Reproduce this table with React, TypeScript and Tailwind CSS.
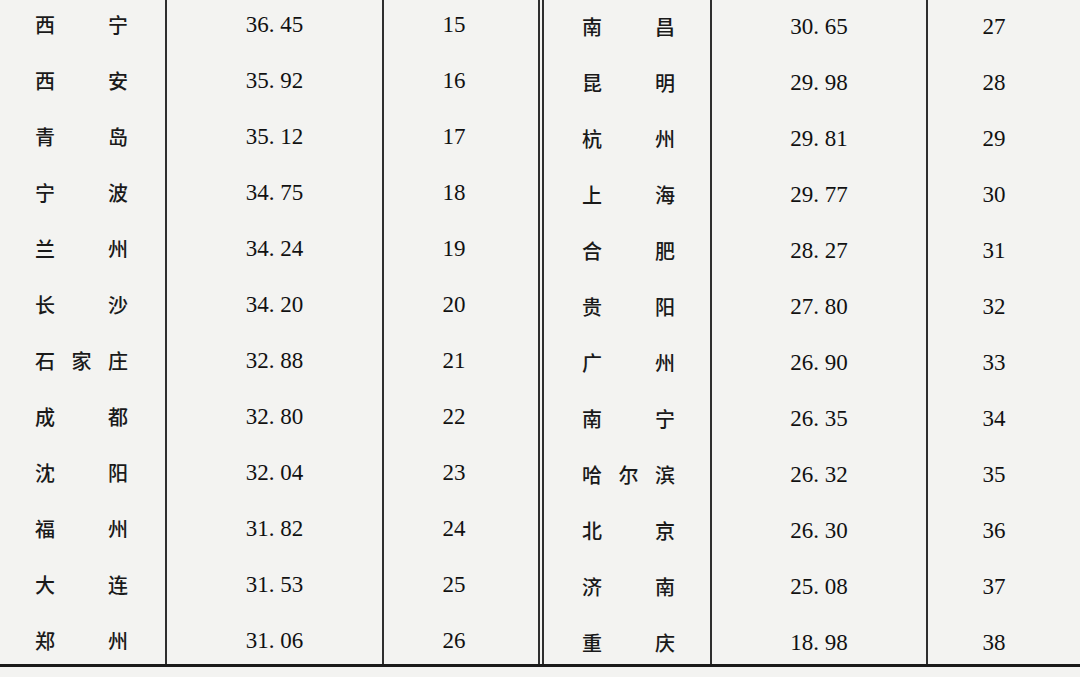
type Row = {
  name: string[];
  value: string;
  rank: number;
};

const leftRows: Row[] = [
  { name: ["西", "宁"], value: "36. 45", rank: 15 },
  { name: ["西", "安"], value: "35. 92", rank: 16 },
  { name: ["青", "岛"], value: "35. 12", rank: 17 },
  { name: ["宁", "波"], value: "34. 75", rank: 18 },
  { name: ["兰", "州"], value: "34. 24", rank: 19 },
  { name: ["长", "沙"], value: "34. 20", rank: 20 },
  { name: ["石", "家", "庄"], value: "32. 88", rank: 21 },
  { name: ["成", "都"], value: "32. 80", rank: 22 },
  { name: ["沈", "阳"], value: "32. 04", rank: 23 },
  { name: ["福", "州"], value: "31. 82", rank: 24 },
  { name: ["大", "连"], value: "31. 53", rank: 25 },
  { name: ["郑", "州"], value: "31. 06", rank: 26 },
];

const rightRows: Row[] = [
  { name: ["南", "昌"], value: "30. 65", rank: 27 },
  { name: ["昆", "明"], value: "29. 98", rank: 28 },
  { name: ["杭", "州"], value: "29. 81", rank: 29 },
  { name: ["上", "海"], value: "29. 77", rank: 30 },
  { name: ["合", "肥"], value: "28. 27", rank: 31 },
  { name: ["贵", "阳"], value: "27. 80", rank: 32 },
  { name: ["广", "州"], value: "26. 90", rank: 33 },
  { name: ["南", "宁"], value: "26. 35", rank: 34 },
  { name: ["哈", "尔", "滨"], value: "26. 32", rank: 35 },
  { name: ["北", "京"], value: "26. 30", rank: 36 },
  { name: ["济", "南"], value: "25. 08", rank: 37 },
  { name: ["重", "庆"], value: "18. 98", rank: 38 },
];

const cjk = "font-['Noto_Sans_CJK_SC',sans-serif] font-medium";
const serif = "font-['Liberation_Serif','Times_New_Roman',serif]";

function Half({ rows, right }: { rows: Row[]; right?: boolean }) {
  return (
    <div className={right ? "flex flex-col w-[534px]" : "flex flex-col w-[540px]"}>
      {rows.map((r) => (
        <div key={r.rank} className="flex h-[56px] shrink-0">
          <div
            className={
              right
                ? "w-[168px] border-r-2 border-[#2e2e2e] flex items-center pl-[38px] pb-[2px]"
                : "w-[167px] border-r-2 border-[#2e2e2e] flex items-center pl-[35px] pb-[6px]"
            }
          >
            <div className={`flex justify-between w-[93px] text-[20px] text-[#1a1a1a] ${cjk}`}>
              {r.name.map((c, i) => (
                <span key={i}>{c}</span>
              ))}
            </div>
          </div>
          <div
            className={
              right
                ? "w-[216px] border-r-2 border-[#2e2e2e] flex items-center justify-center pb-[2px]"
                : "w-[217px] border-r-2 border-[#2e2e2e] flex items-center justify-center pb-[6px]"
            }
          >
            <span className={`text-[23px] text-[#111] whitespace-pre ${serif}`}>{r.value}</span>
          </div>
          <div
            className={
              right
                ? "flex-1 flex items-center justify-center pr-[18px] pb-[2px]"
                : "flex-1 flex items-center justify-center pr-[14px] pb-[6px] border-r-2 border-[#2e2e2e]"
            }
          >
            <span className={`text-[23px] text-[#111] ${serif}`}>{r.rank}</span>
          </div>
        </div>
      ))}
    </div>
  );
}

export default function App() {
  return (
    <div className="w-[1080px] h-[677px] bg-[#f3f3f1] overflow-hidden">
      <div className="flex h-[667px] border-b-[3px] border-[#1a1a1a] overflow-hidden">
        <Half rows={leftRows} />
        <div className="w-[4px] shrink-0 border-r-2 border-[#2e2e2e]" />
        <Half rows={rightRows} right />
      </div>
    </div>
  );
}
